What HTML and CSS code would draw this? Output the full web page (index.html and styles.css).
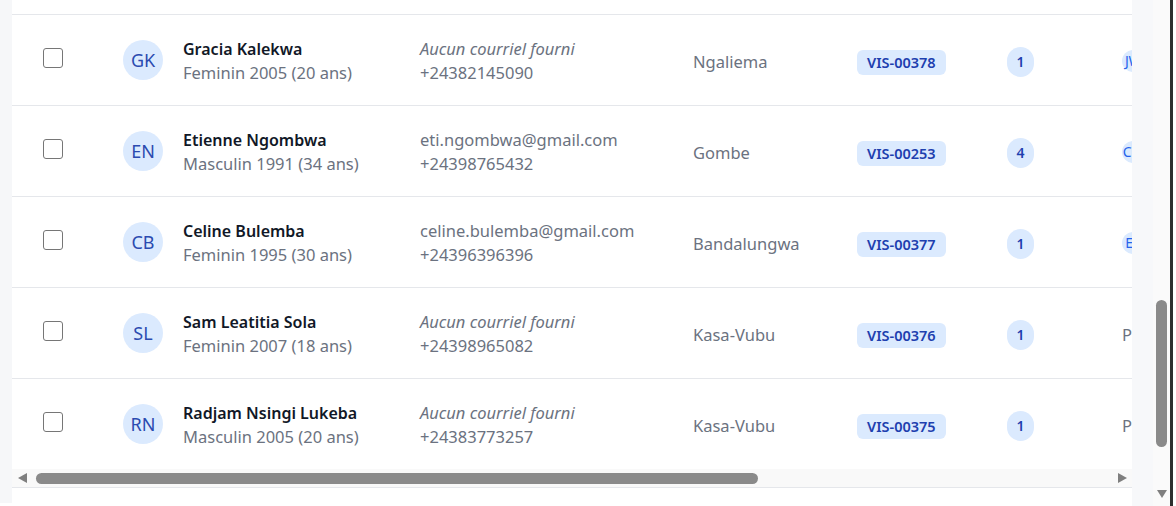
FILE: index.html
```html
<!DOCTYPE html>
<html lang="fr">
<head>
<meta charset="utf-8">
<title>Visiteurs</title>
<link rel="stylesheet" href="styles.css">
</head>
<body>
<div class="page">
  <div class="gutter-left"></div>
  <div class="main">
    <div class="rows">
      <div class="row-partial"></div>

      <div class="row">
        <div class="cell-check"><span class="checkbox"></span></div>
        <div class="cell-person">
          <span class="avatar">GK</span>
          <div class="lines">
            <div class="name">Gracia Kalekwa</div>
            <div class="sub">Feminin 2005 (20 ans)</div>
          </div>
        </div>
        <div class="lines">
          <div class="sub empty">Aucun courriel fourni</div>
          <div class="sub">+24382145090</div>
        </div>
        <div class="sub loc">Ngaliema</div>
        <div><span class="badge">VIS-00378</span></div>
        <div><span class="count">1</span></div>
        <div class="agent"><span class="mini">JW</span><span class="agent-name">Jean Wemba</span></div>
      </div>

      <div class="row">
        <div class="cell-check"><span class="checkbox"></span></div>
        <div class="cell-person">
          <span class="avatar">EN</span>
          <div class="lines">
            <div class="name">Etienne Ngombwa</div>
            <div class="sub">Masculin 1991 (34 ans)</div>
          </div>
        </div>
        <div class="lines">
          <div class="sub">eti.ngombwa@gmail.com</div>
          <div class="sub">+24398765432</div>
        </div>
        <div class="sub loc">Gombe</div>
        <div><span class="badge">VIS-00253</span></div>
        <div><span class="count">4</span></div>
        <div class="agent"><span class="mini">CM</span><span class="agent-name">Claude Mbuyi</span></div>
      </div>

      <div class="row">
        <div class="cell-check"><span class="checkbox"></span></div>
        <div class="cell-person">
          <span class="avatar">CB</span>
          <div class="lines">
            <div class="name">Celine Bulemba</div>
            <div class="sub">Feminin 1995 (30 ans)</div>
          </div>
        </div>
        <div class="lines">
          <div class="sub">celine.bulemba@gmail.com</div>
          <div class="sub">+24396396396</div>
        </div>
        <div class="sub loc">Bandalungwa</div>
        <div><span class="badge">VIS-00377</span></div>
        <div><span class="count">1</span></div>
        <div class="agent"><span class="mini">EK</span><span class="agent-name">Esther Kabongo</span></div>
      </div>

      <div class="row">
        <div class="cell-check"><span class="checkbox"></span></div>
        <div class="cell-person">
          <span class="avatar">SL</span>
          <div class="lines">
            <div class="name">Sam Leatitia Sola</div>
            <div class="sub">Feminin 2007 (18 ans)</div>
          </div>
        </div>
        <div class="lines">
          <div class="sub empty">Aucun courriel fourni</div>
          <div class="sub">+24398965082</div>
        </div>
        <div class="sub loc">Kasa-Vubu</div>
        <div><span class="badge">VIS-00376</span></div>
        <div><span class="count">1</span></div>
        <div class="sub loc">Pas assigné</div>
      </div>

      <div class="row">
        <div class="cell-check"><span class="checkbox"></span></div>
        <div class="cell-person">
          <span class="avatar">RN</span>
          <div class="lines">
            <div class="name">Radjam Nsingi Lukeba</div>
            <div class="sub">Masculin 2005 (20 ans)</div>
          </div>
        </div>
        <div class="lines">
          <div class="sub empty">Aucun courriel fourni</div>
          <div class="sub">+24383773257</div>
        </div>
        <div class="sub loc">Kasa-Vubu</div>
        <div><span class="badge">VIS-00375</span></div>
        <div><span class="count">1</span></div>
        <div class="sub loc">Pas assigné</div>
      </div>
    </div>

    <div class="hscroll">
      <span class="arrow-left"></span>
      <span class="hthumb"></span>
      <span class="hspace"></span>
      <span class="arrow-right"></span>
    </div>
    <div class="bottom"></div>
  </div>

  <div class="gutter-right"></div>
  <div class="vscroll">
    <span class="vthumb"></span>
    <span class="vspace"></span>
    <span class="arrow-down"></span>
  </div>
  <div class="edge"></div>
  <div class="edge-white"></div>
</div>
</body>
</html>
```

FILE: styles.css
```css
* {
  box-sizing: border-box;
}

html, body {
  margin: 0;
  padding: 0;
  background: #ffffff;
}

body {
  font-family: "Noto Sans", "Open Sans", sans-serif;
  font-size: 16px;
  line-height: 24px;
  color: #111827;
}

.page {
  display: flex;
  width: 1176px;
  height: 506px;
  overflow: hidden;
}

.gutter-left {
  flex: none;
  width: 12px;
  height: 503px;
  background: #f6f7f9;
}

.main {
  flex: none;
  width: 1120px;
  display: flex;
  flex-direction: column;
  overflow: hidden;
  background: #ffffff;
}

.rows {
  flex: none;
  height: 469px;
  overflow: hidden;
}

.row-partial {
  height: 14px;
}

.row {
  display: grid;
  grid-template-columns: 111px 297px 273px 164px 150px 115px 300px;
  width: 1410px;
  height: 91px;
  border-top: 1px solid #e5e7eb;
  align-items: center;
}

.cell-check {
  padding-left: 31px;
  display: flex;
}

.checkbox {
  width: 20px;
  height: 20px;
  border: 1px solid #767676;
  border-radius: 3px;
  background: #ffffff;
  margin-bottom: 4px;
}

.cell-person {
  display: flex;
  align-items: center;
  gap: 20px;
}

.avatar {
  flex: none;
  width: 40px;
  height: 40px;
  border-radius: 50%;
  background: #dbeafe;
  color: #2b4bb0;
  font-size: 18px;
  line-height: 40px;
  text-align: center;
}

.lines {
  display: flex;
  flex-direction: column;
  white-space: nowrap;
  padding-top: 1px;
}

.name {
  font-weight: 600;
  color: #111827;
  font-size: 16px;
}

.sub {
  color: #6b7280;
  white-space: nowrap;
  font-size: 16.5px;
}

.empty {
  font-style: italic;
}

.loc {
  padding-top: 3px;
}

.badge {
  display: inline-block;
  padding: 2px 10px;
  border-radius: 6px;
  background: #dbeafe;
  color: #1e40af;
  font-size: 14.5px;
  font-weight: 600;
  line-height: 21px;
  margin-top: 4px;
}

.count {
  display: inline-block;
  min-width: 27px;
  padding: 5px 9px;
  border-radius: 9999px;
  background: #dbeafe;
  color: #1e40af;
  font-size: 14px;
  font-weight: 600;
  line-height: 20px;
  text-align: center;
  margin-top: 4px;
}

.agent {
  display: flex;
  align-items: center;
  gap: 8px;
  padding-top: 2px;
}

.mini {
  flex: none;
  width: 22px;
  height: 22px;
  border-radius: 50%;
  background: #dbeafe;
  color: #2563eb;
  font-size: 14px;
  line-height: 22px;
  text-align: center;
  letter-spacing: -0.5px;
}

.agent-name {
  color: #374151;
  font-size: 15px;
}

.hscroll {
  flex: none;
  height: 19px;
  background: #f9f9f9;
  border-bottom: 1px solid #e5e7eb;
  display: flex;
  align-items: center;
  padding: 0 5px 0 6px;
}

.arrow-left {
  width: 0;
  height: 0;
  border-top: 5px solid transparent;
  border-bottom: 5px solid transparent;
  border-right: 9px solid #7f7f7f;
  margin-right: 9px;
}

.hthumb {
  width: 722px;
  height: 11px;
  border-radius: 6px;
  background: #8a8a8a;
}

.hspace {
  flex: 1;
}

.arrow-right {
  width: 0;
  height: 0;
  border-top: 5px solid transparent;
  border-bottom: 5px solid transparent;
  border-left: 9px solid #7f7f7f;
}

.bottom {
  flex: 1;
  background: #ffffff;
}

.gutter-right {
  flex: none;
  width: 21px;
  background: #f7f8fa;
}

.vscroll {
  flex: none;
  width: 17px;
  background: #fafafa;
  display: flex;
  flex-direction: column;
  align-items: center;
}

.vthumb {
  margin-top: 300px;
  width: 11px;
  height: 147px;
  border-radius: 6px;
  background: #8a8a8a;
}

.vspace {
  flex: 1;
}

.arrow-down {
  width: 0;
  height: 0;
  border-left: 5px solid transparent;
  border-right: 5px solid transparent;
  border-top: 8px solid #7f7f7f;
  margin-bottom: 8px;
}

.edge {
  flex: none;
  width: 3px;
  background: #2f2f2f;
}

.edge-white {
  flex: none;
  width: 3px;
  background: #ffffff;
}
```
